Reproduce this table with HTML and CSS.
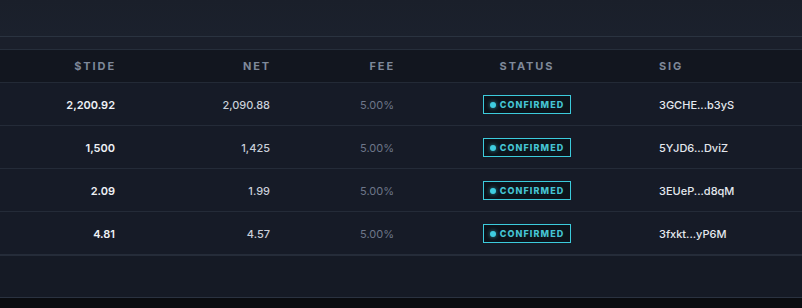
FILE: index.html
```html
<!DOCTYPE html>
<html>
<head>
<meta charset="utf-8">
<link rel="stylesheet" href="styles.css">
</head>
<body>
<div class="page">
  <div class="topbar"></div>
  <div class="subbar"></div>
  <div class="table">
    <div class="row head">
      <div class="c c1">$TIDE</div>
      <div class="c c2">NET</div>
      <div class="c c3">FEE</div>
      <div class="c c4">STATUS</div>
      <div class="c c5">SIG</div>
    </div>
    <div class="row">
      <div class="c c1 amt">2,200.92</div>
      <div class="c c2 net">2,090.88</div>
      <div class="c c3 fee">5.00%</div>
      <div class="c c4"><span class="badge"><span class="dot"></span>CONFIRMED</span></div>
      <div class="c c5 sig">3GCHE...b3yS</div>
    </div>
    <div class="row">
      <div class="c c1 amt">1,500</div>
      <div class="c c2 net">1,425</div>
      <div class="c c3 fee">5.00%</div>
      <div class="c c4"><span class="badge"><span class="dot"></span>CONFIRMED</span></div>
      <div class="c c5 sig">5YJD6...DviZ</div>
    </div>
    <div class="row">
      <div class="c c1 amt">2.09</div>
      <div class="c c2 net">1.99</div>
      <div class="c c3 fee">5.00%</div>
      <div class="c c4"><span class="badge"><span class="dot"></span>CONFIRMED</span></div>
      <div class="c c5 sig">3EUeP...d8qM</div>
    </div>
    <div class="row last">
      <div class="c c1 amt">4.81</div>
      <div class="c c2 net">4.57</div>
      <div class="c c3 fee">5.00%</div>
      <div class="c c4"><span class="badge"><span class="dot"></span>CONFIRMED</span></div>
      <div class="c c5 sig">3fxkt...yP6M</div>
    </div>
  </div>
  <div class="footer"></div>
  <div class="bottom"></div>
</div>
</body>
</html>
```

FILE: styles.css
```css
html, body {
  margin: 0;
  padding: 0;
  background: #0a0c10;
}
body {
  font-family: Inter, "Noto Sans", sans-serif;
  width: 802px;
  height: 308px;
  overflow: hidden;
}
.page {
  display: flex;
  flex-direction: column;
}
.topbar {
  height: 36px;
  background: linear-gradient(#1a1f2a, #1b212d);
  border-bottom: 1px solid #2a3340;
}
.subbar {
  height: 12px;
  background: #1a1f2b;
  border-bottom: 1px solid #262e3b;
}
.table {
  display: flex;
  flex-direction: column;
}
.row {
  display: grid;
  grid-template-columns: 130px 155px 124px 234px 159px;
  align-items: center;
  height: 42px;
  padding-top: 1px;
  box-sizing: border-box;
  height: 43px;
  background: #161b27;
  border-bottom: 1px solid #242b38;
  font-size: 11px;
}
.row.head {
  height: 33px;
  padding-top: 0;
  background: #12161f;
  border-bottom: 1px solid #232a36;
}
.row.last {
  height: 44px;
  border-bottom: 2px solid #252c39;
}
.c1, .c2, .c3 {
  text-align: right;
  padding-right: 15px;
}
.c4 {
  text-align: center;
  padding-left: 2px;
}
.c5 {
  padding-left: 16px;
}
.head .c {
  font-weight: 700;
  letter-spacing: 1.9px;
  color: #7f899a;
  font-size: 11px;
}
.head .c1, .head .c2, .head .c3 {
  padding-right: 14px;
}
.amt {
  color: #eef1f5;
  font-weight: 600;
}
.net {
  color: #c9cfd9;
  font-weight: 500;
}
.fee {
  color: #6d7689;
  font-weight: 400;
}
.sig {
  color: #e4e8ee;
  font-weight: 500;
}
.badge {
  display: inline-flex;
  align-items: center;
  gap: 4px;
  height: 17px;
  padding: 0 6px 0 6px;
  border: 1px solid #3ccbdc;
  background: #0d131b;
  color: #45c3d3;
  font-size: 9px;
  font-weight: 800;
  letter-spacing: 1.1px;
}
.dot {
  width: 6px;
  height: 6px;
  border-radius: 50%;
  background: #3fcde0;
  box-shadow: 0 0 4px rgba(63, 205, 224, 0.7);
}
.footer {
  height: 42px;
  box-sizing: border-box;
  background: #151a25;
  border-bottom: 1px solid #2a3240;
}
.bottom {
  height: 9px;
  background: #0a0c10;
}
```
